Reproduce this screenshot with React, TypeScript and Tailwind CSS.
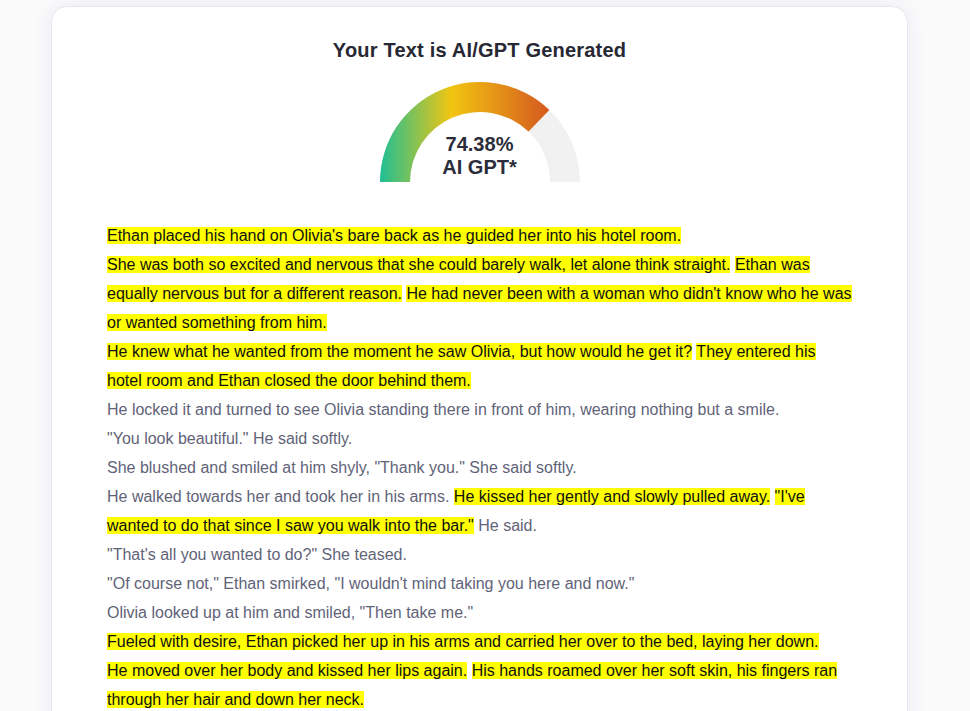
import React from 'react';

type Sentence = { text: string; ai: boolean };

const paragraphs: Sentence[][] = [
  [{ text: "Ethan placed his hand on Olivia's bare back as he guided her into his hotel room.", ai: true }],
  [
    { text: 'She was both so excited and nervous that she could barely walk, let alone think straight.', ai: true },
    { text: 'Ethan was equally nervous but for a different reason.', ai: true },
    { text: "He had never been with a woman who didn't know who he was or wanted something from him.", ai: true },
  ],
  [
    { text: 'He knew what he wanted from the moment he saw Olivia, but how would he get it?', ai: true },
    { text: 'They entered his hotel room and Ethan closed the door behind them.', ai: true },
  ],
  [{ text: 'He locked it and turned to see Olivia standing there in front of him, wearing nothing but a smile.', ai: false }],
  [{ text: '"You look beautiful." He said softly.', ai: false }],
  [{ text: 'She blushed and smiled at him shyly, "Thank you." She said softly.', ai: false }],
  [
    { text: 'He walked towards her and took her in his arms.', ai: false },
    { text: 'He kissed her gently and slowly pulled away.', ai: true },
    { text: '"I\'ve wanted to do that since I saw you walk into the bar."', ai: true },
    { text: 'He said.', ai: false },
  ],
  [{ text: '"That\'s all you wanted to do?" She teased.', ai: false }],
  [{ text: '"Of course not," Ethan smirked, "I wouldn\'t mind taking you here and now."', ai: false }],
  [{ text: 'Olivia looked up at him and smiled, "Then take me."', ai: false }],
  [{ text: 'Fueled with desire, Ethan picked her up in his arms and carried her over to the bed, laying her down.', ai: true }],
  [
    { text: 'He moved over her body and kissed her lips again.', ai: true },
    { text: 'His hands roamed over her soft skin, his fingers ran through her hair and down her neck.', ai: true },
  ],
];

// half-ring band between two angles (radians, 0 = right, PI = left)
function band(cx: number, cy: number, ro: number, ri: number, a0: number, a1: number) {
  const p = (r: number, a: number) => `${cx + r * Math.cos(a)} ${cy - r * Math.sin(a)}`;
  return `M ${p(ro, a0)} A ${ro} ${ro} 0 0 1 ${p(ro, a1)} L ${p(ri, a1)} A ${ri} ${ri} 0 0 0 ${p(ri, a0)} Z`;
}

const Gauge: React.FC<{ value: number }> = ({ value }) => {
  const end = Math.PI * (1 - value / 100);
  return (
    <div className="relative h-[100px] w-[200px]">
      <svg width="200" height="100" viewBox="0 0 200 100" className="absolute inset-0">
        <defs>
          <linearGradient id="meter" gradientUnits="userSpaceOnUse" x1="0" y1="0" x2="170" y2="0">
            <stop offset="0" stopColor="#1fbf94" />
            <stop offset="0.42" stopColor="#f2c511" />
            <stop offset="1" stopColor="#d4581f" />
          </linearGradient>
        </defs>
        <path d={band(100, 100, 100, 70, Math.PI, 0)} fill="#f1f1f1" />
        <path d={band(100, 100, 100, 70, Math.PI, end)} fill="url(#meter)" />
      </svg>
      <div className="absolute inset-x-0 top-[51px] text-center text-[20px] font-bold leading-[23px] text-[#2b2d3a]">
        <div>{value.toFixed(2)}%</div>
        <div>AI GPT*</div>
      </div>
    </div>
  );
};

export default function App() {
  return (
    <div
      className="h-[711px] overflow-hidden bg-[#fafafb] pt-[6px]"
      style={{ fontFamily: '"Liberation Sans", Arial, sans-serif' }}
    >
      <div className="ml-[51px] w-[857px] rounded-[16px] border border-[#e7e7f3] bg-white px-[55px] pt-[29px] pb-10 shadow-[0_0_18px_rgba(110,110,170,0.10)]">
        <h1 className="text-center text-[20px] font-bold leading-[28px] tracking-[0.2px] text-[#272833]">
          Your Text is AI/GPT Generated
        </h1>
        <div className="mt-[18px] flex justify-center">
          <Gauge value={74.38} />
        </div>
        <div className="mt-[39px] text-[16px] leading-[29px] text-[#5f6378]">
          {paragraphs.map((para, i) => (
            <div key={i}>
              {para.map((s, j) => (
                <React.Fragment key={j}>
                  {j > 0 ? ' ' : null}
                  <span className={s.ai ? 'bg-[#ffff00] text-[#111111]' : ''}>{s.text}</span>
                </React.Fragment>
              ))}
            </div>
          ))}
        </div>
      </div>
    </div>
  );
}
